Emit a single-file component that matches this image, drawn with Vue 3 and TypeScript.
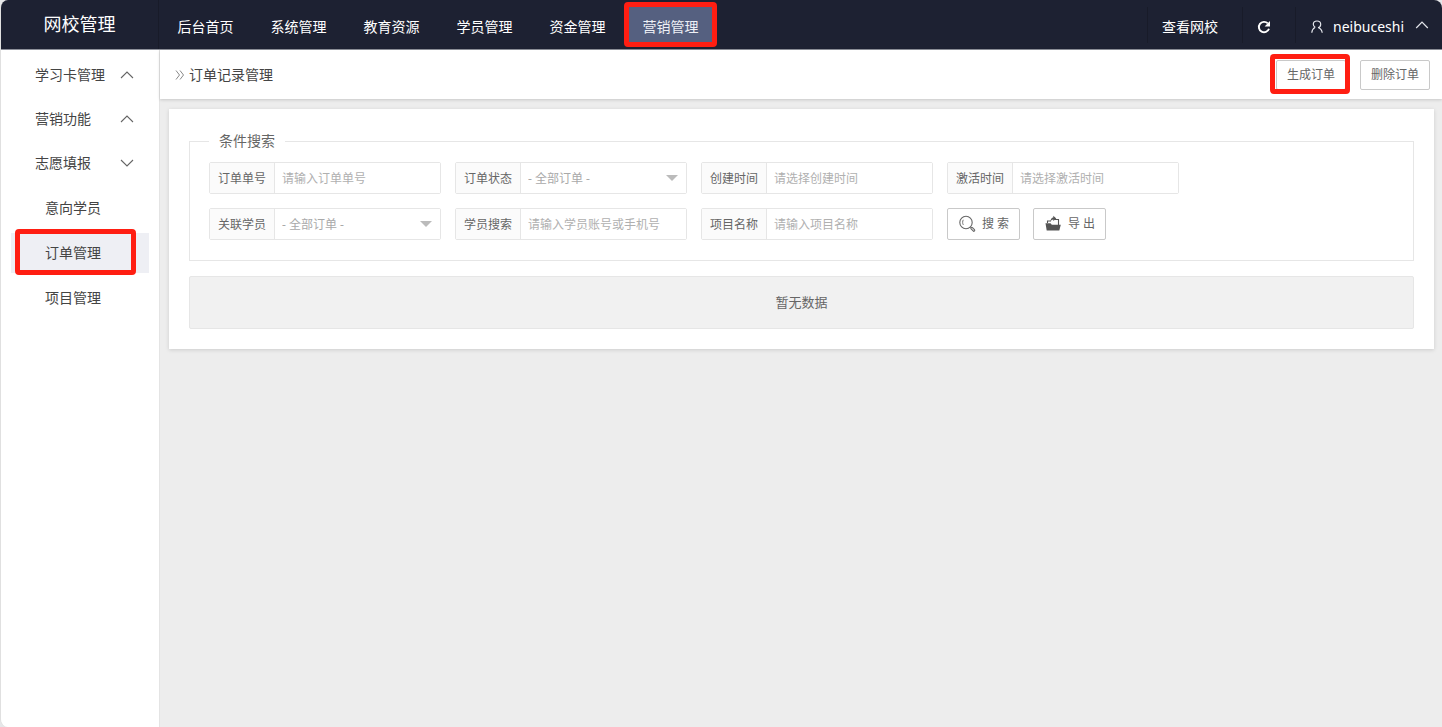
<script setup lang="ts">
import { reactive, ref } from 'vue'

interface Field {
  id: string
  label: string
  placeholder: string
  kind: 'text' | 'select'
}

interface MenuGroup {
  title: string
  open: boolean
}

const navItems: string[] = ['后台首页', '系统管理', '教育资源', '学员管理', '资金管理', '营销管理']
const activeNav = ref('营销管理')

const groups: MenuGroup[] = [
  { title: '学习卡管理', open: false },
  { title: '营销功能', open: false },
  { title: '志愿填报', open: true },
]
const subItems: string[] = ['意向学员', '订单管理', '项目管理']
const activeSub = ref('订单管理')

const fields: Field[] = [
  { id: 'orderNo', label: '订单单号', placeholder: '请输入订单单号', kind: 'text' },
  { id: 'status', label: '订单状态', placeholder: '- 全部订单 -', kind: 'select' },
  { id: 'created', label: '创建时间', placeholder: '请选择创建时间', kind: 'text' },
  { id: 'activated', label: '激活时间', placeholder: '请选择激活时间', kind: 'text' },
  { id: 'related', label: '关联学员', placeholder: '- 全部订单 -', kind: 'select' },
  { id: 'student', label: '学员搜索', placeholder: '请输入学员账号或手机号', kind: 'text' },
  { id: 'project', label: '项目名称', placeholder: '请输入项目名称', kind: 'text' },
]
const form = reactive<Record<string, string>>({
  orderNo: '', status: '', created: '', activated: '', related: '', student: '', project: '',
})
</script>

<template>
  <div class="app">
    <header class="top">
      <div class="brand">网校管理</div>
      <nav class="nav">
        <a
          v-for="item in navItems"
          :key="item"
          href="#"
          class="nav-item"
          :class="{ active: item === activeNav }"
          @click.prevent="activeNav = item"
        >{{ item }}<span v-if="item === activeNav" class="mark"></span></a>
      </nav>
      <div class="tools">
        <a href="#" class="tool site">查看网校</a>
        <button type="button" class="tool refresh" aria-label="刷新">
          <svg width="14" height="14" viewBox="0 0 14 14">
            <path d="M12 8.800A5.200 5.200 0 1 1 10.800 3.400" fill="none" stroke="#fff" stroke-width="1.900" />
            <path d="M13 1v5.400H7.600z" fill="#fff" />
          </svg>
        </button>
        <button type="button" class="tool user">
          <svg class="person" width="12" height="14" viewBox="0 0 12 14" fill="none" stroke="#e4e6ec" stroke-width="1.200">
            <path d="M4.200 7.200C2.900 6.500 2.300 5.500 2.300 4.200C2.300 2.300 3.900 1 6 1s3.700 1.300 3.700 3.200c0 1.700-1.100 3.100-2.700 3.600M4.200 7.200C2.300 8.200 1 10.200.8 12.800M7.500 7.700c2 .7 3.400 2.500 3.700 5.100" />
          </svg>
          <span>neibuceshi</span>
          <svg class="caret" width="14" height="8" viewBox="0 0 14 8" fill="none" stroke="#e4e6ec" stroke-width="1.200">
            <path d="M1.200 7L7 1.200L12.800 7" />
          </svg>
        </button>
      </div>
    </header>

    <div class="body">
      <aside class="side">
        <button v-for="g in groups" :key="g.title" type="button" class="group">
          <span>{{ g.title }}</span>
          <svg width="14" height="8" viewBox="0 0 14 8" fill="none" stroke="#666" stroke-width="1.100">
            <path :d="g.open ? 'M1 1L7 7L13 1' : 'M1 7L7 1L13 7'" />
          </svg>
        </button>
        <a
          v-for="s in subItems"
          :key="s"
          href="#"
          class="sub"
          :class="{ active: s === activeSub }"
          @click.prevent="activeSub = s"
        >{{ s }}<span v-if="s === activeSub" class="mark"></span></a>
      </aside>

      <main class="main">
        <div class="crumb">
          <svg width="10" height="10" viewBox="0 0 10 10" fill="none" stroke="#888" stroke-width="1">
            <path d="M1 .5L4.500 5L1 9.500M5 .5L8.500 5L5 9.500" />
          </svg>
          <h1>订单记录管理</h1>
          <div class="actions">
            <button type="button" class="btn">生成订单<span class="mark"></span></button>
            <button type="button" class="btn">删除订单</button>
          </div>
        </div>

        <section class="card">
          <form @submit.prevent>
            <fieldset>
              <legend>条件搜索</legend>
              <div class="fields">
                <div v-for="f in fields" :key="f.id" class="field">
                  <label :for="f.id">{{ f.label }}</label>
                  <template v-if="f.kind === 'select'">
                    <select :id="f.id" v-model="form[f.id]">
                      <option value="">{{ f.placeholder }}</option>
                    </select>
                    <svg class="arrow" width="12" height="6" viewBox="0 0 12 6"><path d="M0 0h12L6 6z" fill="#bbb" /></svg>
                  </template>
                  <input v-else :id="f.id" v-model="form[f.id]" type="text" :placeholder="f.placeholder" />
                </div>
                <div class="buttons">
                  <button type="submit" class="btn icon-btn">
                    <svg width="18" height="18" viewBox="0 0 18 18" fill="none" stroke="#666">
                      <circle cx="8" cy="7.500" r="6.200" stroke-width="1.100" />
                      <path d="M5.300 4.800C4.400 6.200 4.400 8.400 5.300 9.900" stroke-width=".9" />
                      <path d="M12.500 12l1.300 1.300" stroke-width="1" />
                      <path d="M13.800 13.300l2 2" stroke-width="3" stroke-linecap="round" />
                      <path d="M13.900 13.400l1.800 1.800" stroke="#ccc" stroke-width="1.200" stroke-linecap="round" />
                    </svg>
                    <span>搜 索</span>
                  </button>
                  <button type="button" class="btn icon-btn">
                    <svg width="18" height="18" viewBox="0 0 18 18">
                      <path d="M3.500 8V6H7M10.500 4.500H14.500V10" fill="none" stroke="#555" stroke-width="1.100" />
                      <path d="M1.500 8.300h5l1.300 1.500h9L15.300 15.500H2.700z" fill="#555" />
                      <path d="M6.500 6.500C6.500 4 7.600 2.600 9.300 2.400V.7L12.300 3.500L9.300 6V4.400C8.100 4.500 7.200 5.100 6.500 6.500z" fill="#555" />
                    </svg>
                    <span>导 出</span>
                  </button>
                </div>
              </div>
            </fieldset>
          </form>
          <div class="empty">暂无数据</div>
        </section>
      </main>
    </div>
  </div>
</template>

<style>
body {
  margin: 0;
  background: #e6e7e9;
}
</style>

<style scoped>
* {
  box-sizing: border-box;
}

.app {
  display: flex;
  flex-direction: column;
  min-height: 100vh;
  overflow: hidden;
  border-left: 1px solid #e0e0e0;
  border-radius: 8px 8px 0 8px;
  background: #ededed;
  color: #444;
  font: 14px/20px "Noto Sans", "Noto Sans CJK SC", sans-serif;
}

a {
  color: inherit;
  text-decoration: none;
}

button,
input,
select {
  margin: 0;
  font: inherit;
  color: inherit;
}

button {
  cursor: pointer;
}

.mark {
  position: absolute;
  border: 5px solid #ff1e12;
  border-radius: 4px;
  pointer-events: none;
}

.top {
  display: flex;
  height: 50px;
  border-bottom: 1px solid #8d909a;
  background: #1d2132;
  color: #fff;
}

.brand {
  flex: none;
  width: 158px;
  border-right: 1px solid #181b29;
  font-size: 18px;
  line-height: 49px;
  text-align: center;
}

.nav {
  display: flex;
}

.nav-item {
  position: relative;
  width: 93px;
  height: 49px;
  line-height: 54px;
  text-align: center;
}

.nav-item.active {
  height: 46px;
  padding: 2px 4px;
  background: #556080 content-box;
  color: #eef0f5;
  line-height: 50px;
}

.nav-item .mark {
  inset: 2px 0 -1px;
}

.tools {
  display: flex;
  align-items: flex-end;
  height: 43px;
  margin-left: auto;
}

.tool {
  display: flex;
  align-items: center;
  height: 36px;
  padding: 3px 0 0;
  border: 0;
  border-left: 1px solid #181b29;
  background: none;
}

.site {
  width: 95px;
  padding-left: 14px;
}

.refresh {
  justify-content: center;
  width: 53px;
  padding-right: 10px;
}

.user {
  width: 147px;
  padding-left: 15px;
}

.person {
  margin-right: 10px;
}

.caret {
  margin: 0 13px 4px auto;
}

.body {
  display: flex;
  flex: 1;
}

.side {
  flex: none;
  width: 159px;
  padding: 5px 10px;
  border-right: 1px solid #e4e4e4;
  background: #fff;
}

.group,
.sub {
  position: relative;
  display: flex;
  align-items: center;
  height: 40px;
}

.group {
  justify-content: space-between;
  width: 100%;
  margin-bottom: 4px;
  padding: 0 15px 0 24px;
  border: 0;
  background: none;
}

.sub {
  margin-top: 5px;
  padding-left: 34px;
}

.sub.active {
  background: #eeeff4;
}

.sub .mark {
  inset: -4px 13px -2px 4px;
}

.main {
  flex: 1;
  min-width: 0;
}

.crumb {
  display: flex;
  align-items: center;
  height: 49px;
  padding: 0 12px 0 15px;
  background: #fff;
  box-shadow: 0 1px 3px rgba(0, 0, 0, 0.16);
}

h1 {
  margin: 0 0 0 4px;
  font-size: 14px;
  font-weight: 400;
}

.actions {
  display: flex;
  gap: 14px;
  margin-left: auto;
}

.btn {
  position: relative;
  height: 30px;
  padding: 0 10px;
  border: 1px solid #c9c9c9;
  border-radius: 2px;
  background: #fff;
  color: #666;
  font-size: 12px;
}

.actions .mark {
  inset: -7px -5px -5px -7px;
}

.card {
  margin: 10px 8px 0 9px;
  padding: 22px 20px 20px;
  background: #fff;
  box-shadow: 0 1px 4px rgba(0, 0, 0, 0.14);
}

fieldset {
  min-width: 0;
  margin: 0;
  padding: 11px 19px 20px;
  border: 1px solid #e6e6e6;
}

legend {
  padding: 0 10px;
  color: #666;
}

.fields {
  display: flex;
  flex-wrap: wrap;
  gap: 14px;
  max-width: 1020px;
}

.field {
  position: relative;
  display: flex;
  width: 232px;
  height: 32px;
  border: 1px solid #e6e6e6;
  border-radius: 2px;
  font-size: 12px;
}

.field label {
  flex: none;
  width: 65px;
  border-right: 1px solid #e6e6e6;
  background: #fbfbfb;
  color: #666;
  line-height: 31px;
  text-align: center;
}

.field input,
.field select {
  flex: 1;
  min-width: 0;
  padding: 2px 7px 0;
  border: 0;
  outline: 0;
  background: #fff;
  color: #a9a9a9;
  appearance: none;
}

.field input::placeholder {
  color: #b0b0b0;
  opacity: 1;
}

.arrow {
  position: absolute;
  top: 12px;
  right: 8px;
  pointer-events: none;
}

.buttons {
  display: flex;
  gap: 13px;
}

.icon-btn {
  display: flex;
  align-items: center;
  gap: 6px;
  width: 73px;
  height: 32px;
}

.icon-btn svg {
  flex: none;
}

.icon-btn span {
  white-space: nowrap;
}

.empty {
  margin-top: 15px;
  border: 1px solid #e6e6e6;
  border-radius: 2px;
  background: #f1f1f1;
  color: #666;
  font-size: 13px;
  line-height: 51px;
  text-align: center;
}
</style>
